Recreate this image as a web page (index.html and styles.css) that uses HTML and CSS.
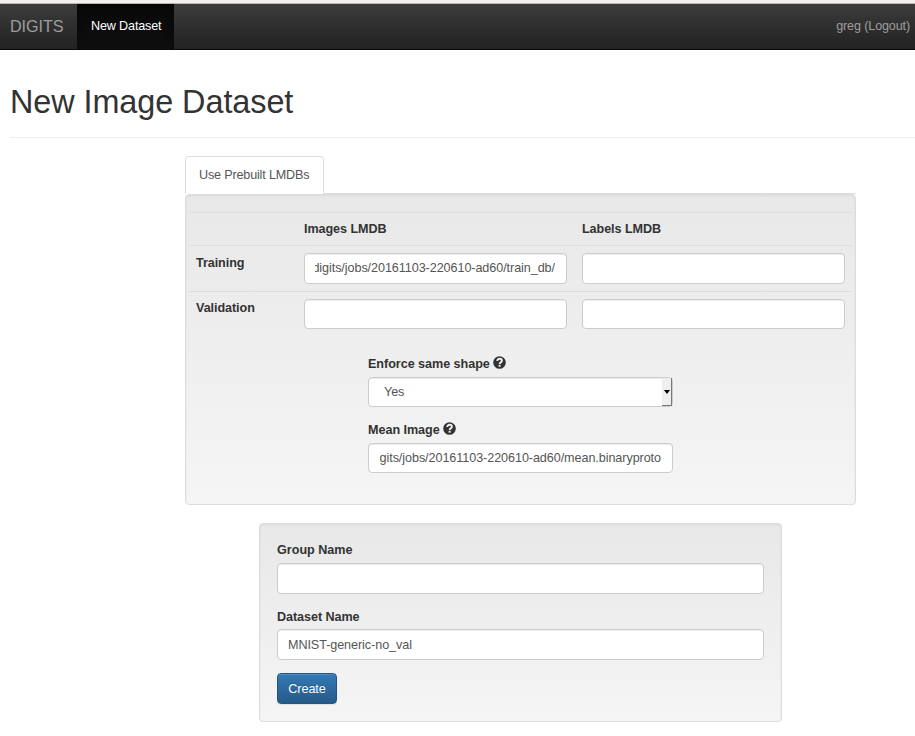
FILE: index.html
```html
<!DOCTYPE html>
<html lang="en">
<head>
<meta charset="utf-8">
<title>New Image Dataset</title>
<link rel="stylesheet" href="styles.css">
</head>
<body>
<svg class="defs" width="0" height="0" aria-hidden="true">
  <symbol id="help" viewBox="0 0 13 13">
    <circle cx="6.5" cy="6.5" r="6.3" fill="#333"/>
    <path d="M4.3 5.1C4.3 3.5 5.2 2.8 6.6 2.8S8.9 3.6 8.9 4.8C8.9 6.3 6.6 6.4 6.6 7.9" fill="none" stroke="#f0f0f0" stroke-width="1.9"/>
    <path d="M5.6 8.8h2v1.9h-2z" fill="#f0f0f0"/>
  </symbol>
</svg>
<div class="topstrip"></div>
<nav class="navbar">
  <a class="brand">DIGITS</a>
  <a class="nav-item active"><span>New Dataset</span></a>
  <a class="nav-item user"><span>greg (Logout)</span></a>
</nav>
<main>
  <header class="page-header"><h1><span>New Image Dataset</span></h1></header>
  <section class="source">
    <div class="tabs"><a class="tab"><span>Use Prebuilt LMDBs</span></a></div>
    <div class="well prebuilt">
      <div class="table">
        <div class="row head"><b></b><b>Images LMDB</b><b>Labels LMDB</b></div>
        <div class="row train"><b>Training</b><div class="control clipped"><span>digits/jobs/20161103-220610-ad60/train_db/</span></div><div class="control"></div></div>
        <div class="row val"><b>Validation</b><div class="control"></div><div class="control"></div></div>
      </div>
      <div class="options">
        <label><span>Enforce same shape</span><svg class="icon"><use href="#help"/></svg></label>
        <div class="control select"><span>Yes</span><i class="arrow"></i></div>
        <label class="mean"><span>Mean Image</span><svg class="icon"><use href="#help"/></svg></label>
        <div class="control path"><span>gits/jobs/20161103-220610-ad60/mean.binaryproto</span></div>
      </div>
    </div>
  </section>
  <section class="well naming">
    <label><span>Group Name</span></label>
    <div class="control tall"></div>
    <label class="second"><span>Dataset Name</span></label>
    <div class="control tall"><span>MNIST-generic-no_val</span></div>
    <button class="create"><span>Create</span></button>
  </section>
</main>
</body>
</html>
```
FILE: styles.css
```css
* { box-sizing: border-box; }
body {
  margin: 0;
  height: 736px;
  overflow: hidden;
  background: #fff;
  color: #333;
  font: 12.6px/18px "Liberation Sans", Arial, sans-serif;
  letter-spacing: -.07px;
}
.defs { display: none; }
span { white-space: nowrap; }
.topstrip { height: 4px; background: #f2f1f0; border-bottom: 1px solid #b8b5b2; }
.navbar {
  display: flex;
  height: 46px;
  background: linear-gradient(#3c3c3c, #222);
  border-bottom: 1px solid #080808;
  color: #9d9d9d;
}
.brand { width: 77px; padding: 13px 0 0 10px; font-size: 16.2px; line-height: 19px; }
.nav-item { padding-top: 13px; }
.active {
  width: 97px;
  padding-left: 14px;
  color: #fff;
  background: linear-gradient(#080808, #0f0f0f);
  box-shadow: inset 0 3px 8px rgba(0,0,0,.25);
  letter-spacing: -.15px;
}
.user { margin-left: auto; padding-right: 5px; letter-spacing: -.14px; }
.page-header { height: 88px; margin-left: 10px; padding-top: 34px; border-bottom: 1px solid #eee; }
h1 { margin: 0; font-size: 32.4px; line-height: 36px; font-weight: 400; }
.source { width: 671px; margin: 18px 0 0 185px; }
.tabs { height: 38px; border-bottom: 1px solid #ddd; }
.tab {
  display: block;
  width: 139px;
  height: 38px;
  padding: 9px 0 0 13px;
  background: #fff;
  border: 1px solid #ddd;
  border-bottom-color: #fff;
  border-radius: 4px 4px 0 0;
  color: #555;
  letter-spacing: -.17px;
}
.well {
  border: 1px solid #dcdcdc;
  border-radius: 4px;
  background: linear-gradient(#e8e8e8, #f5f5f5);
  box-shadow: inset 0 1px 3px rgba(0,0,0,.05), 0 1px 0 rgba(255,255,255,.1);
}
.prebuilt { height: 311px; padding: 17px 3px 0; }
.row {
  display: grid;
  grid-template-columns: 93px 263px 263px;
  column-gap: 15px;
  padding-left: 7px;
  border-top: 1px solid #ddd;
}
.head { height: 33px; padding-top: 7px; }
.train, .val { height: 46px; padding-top: 7px; }
.train b { padding-top: 1px; }
.control {
  display: flex;
  align-items: center;
  height: 30px;
  padding: 0 11px 0 10px;
  background: #fff;
  border: 1px solid #ccc;
  border-radius: 4px;
  color: #555;
  box-shadow: inset 0 1px 1px rgba(0,0,0,.075);
}
.train .control, .tall { height: 31px; }
.clipped { padding-bottom: 1px; }
.tall { padding-top: 1px; }
.clipped span { display: flex; justify-content: flex-end; width: 100%; overflow: hidden; }
.path { justify-content: flex-end; letter-spacing: -.07px; }
.options { width: 305px; margin: 17px 0 0 179px; }
label { display: flex; height: 23px; font-weight: 700; }
.options label { padding-top: 1px; letter-spacing: -.04px; }
.icon { width: 13px; height: 13px; margin: 1px 0 0 3.5px; }
.mean { margin-top: 13px; }
.select { padding: 0 0 0 15px; }
.arrow {
  display: flex;
  align-items: center;
  justify-content: center;
  width: 10px;
  height: 28px;
  margin-left: auto;
  background: #f0efee;
  border-right: 1px solid #777;
  border-bottom: 1px solid #777;
}
.arrow::before { content: ""; border: 3px solid transparent; border-top: 4px solid #000; border-bottom: 0; }
.naming { width: 523px; height: 199px; margin: 18px 0 0 259px; padding: 17px; }
.naming label { height: 22px; letter-spacing: 0; }
.naming .second { margin-top: 14px; height: 21px; letter-spacing: -.07px; }
.create {
  display: block;
  width: 60px;
  height: 31px;
  margin-top: 13px;
  padding: 0;
  color: #fff;
  font: inherit;
  letter-spacing: inherit;
  border: 1px solid #245580;
  border-radius: 4px;
  background: linear-gradient(#337ab7, #265a88);
  box-shadow: inset 0 1px 0 rgba(255,255,255,.15), 0 1px 1px rgba(0,0,0,.075);
  text-shadow: 0 -1px 0 rgba(0,0,0,.2);
}
```
